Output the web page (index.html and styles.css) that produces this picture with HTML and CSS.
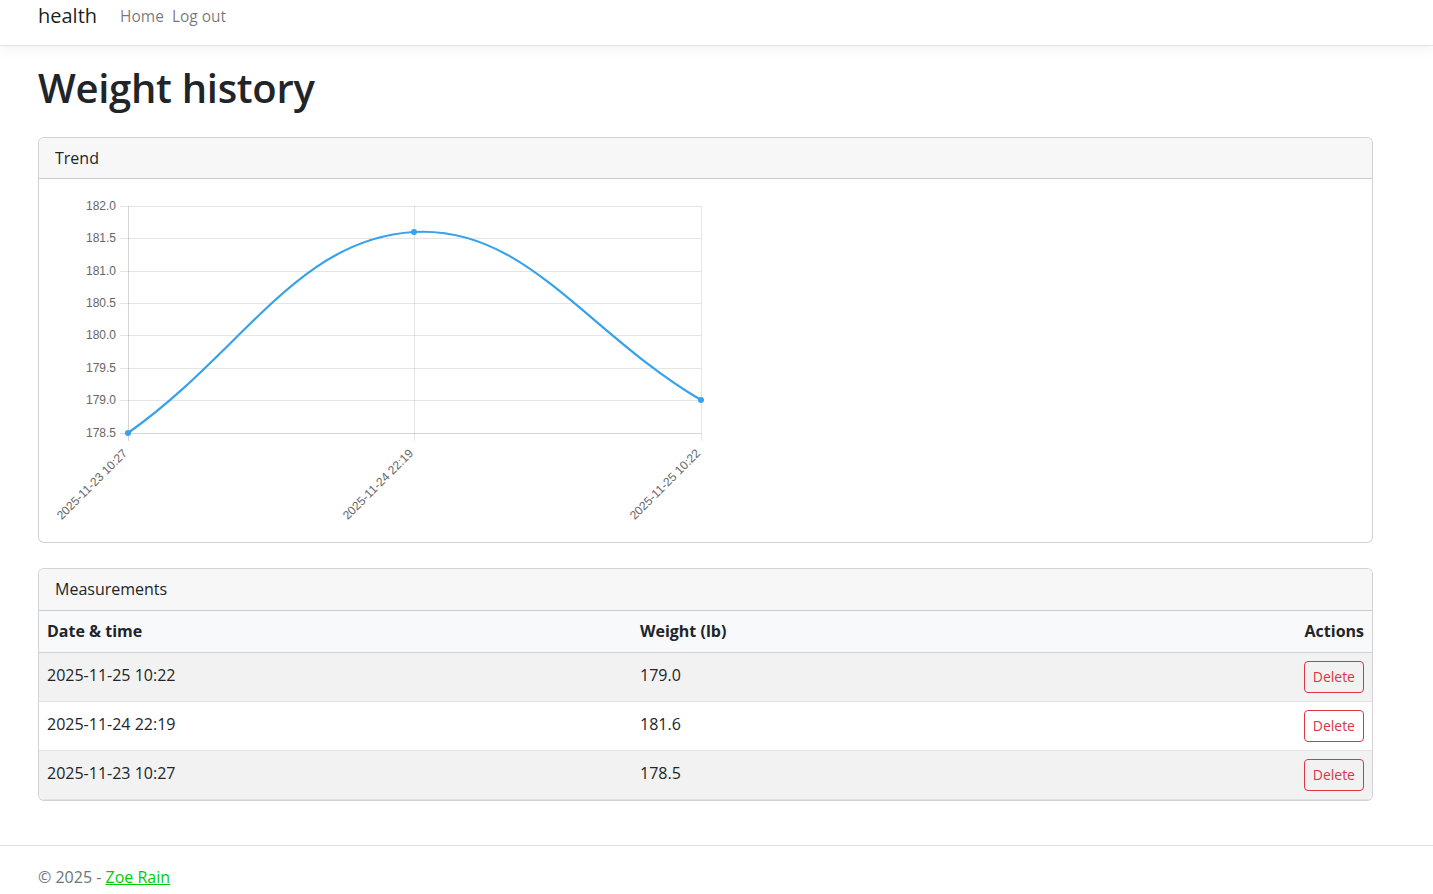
FILE: index.html
```html
<!DOCTYPE html>
<html lang="en">
<head>
<meta charset="utf-8">
<title>Weight history - health</title>
<link rel="stylesheet" href="styles.css">
</head>
<body>
<header class="navbar">
  <div class="container nav-inner">
    <a class="brand" href="#">health</a>
    <nav class="nav-links">
      <a class="nav-link" href="#">Home</a>
      <a class="nav-link" href="#">Log out</a>
    </nav>
  </div>
</header>

<main class="container main">
  <h1 class="title">Weight history</h1>

  <section class="card card-trend">
    <div class="card-header">Trend</div>
    <div class="card-body">
      <svg class="chart" width="660" height="325" viewBox="0 0 660 325" xmlns="http://www.w3.org/2000/svg">
        <g class="grid" stroke="rgba(0,0,0,0.1)" stroke-width="1">
          <line x1="65" y1="11.5" x2="646" y2="11.5"/>
          <line x1="65" y1="43.5" x2="646" y2="43.5"/>
          <line x1="65" y1="76.5" x2="646" y2="76.5"/>
          <line x1="65" y1="108.5" x2="646" y2="108.5"/>
          <line x1="65" y1="140.5" x2="646" y2="140.5"/>
          <line x1="65" y1="173.5" x2="646" y2="173.5"/>
          <line x1="65" y1="205.5" x2="646" y2="205.5"/>
          <line x1="65" y1="238.5" x2="646" y2="238.5" stroke="rgba(0,0,0,0.16)"/>
          <line x1="73.5" y1="11" x2="73.5" y2="246" stroke="rgba(0,0,0,0.16)"/>
          <line x1="359.5" y1="11" x2="359.5" y2="246"/>
          <line x1="646.5" y1="11" x2="646.5" y2="246"/>
        </g>
        <g class="yticks" font-family="Liberation Sans, Arial, sans-serif" font-size="12" fill="#666" text-anchor="end">
          <text x="61" y="14.5">182.0</text>
          <text x="61" y="46.5">181.5</text>
          <text x="61" y="79.5">181.0</text>
          <text x="61" y="111.5">180.5</text>
          <text x="61" y="143.5">180.0</text>
          <text x="61" y="176.5">179.5</text>
          <text x="61" y="208.5">179.0</text>
          <text x="61" y="241.5">178.5</text>
        </g>
        <g class="xticks" font-family="Liberation Sans, Arial, sans-serif" font-size="12" fill="#666" text-anchor="end">
          <text transform="translate(73 259) rotate(-45)">2025-11-23 10:27</text>
          <text transform="translate(359 259) rotate(-45)">2025-11-24 22:19</text>
          <text transform="translate(646 259) rotate(-45)">2025-11-25 10:22</text>
        </g>
        <path d="M73,238 C187.4,157.6 241.5,43.8 359,37 C470.7,30.6 531.2,137.8 646,205" fill="none" stroke="#36a2eb" stroke-width="2.2"/>
        <g fill="#36a2eb">
          <circle cx="73" cy="238" r="3"/>
          <circle cx="359" cy="37" r="3"/>
          <circle cx="646" cy="205" r="3"/>
        </g>
      </svg>
    </div>
  </section>

  <section class="card card-table">
    <div class="card-header">Measurements</div>
    <table class="table">
      <thead>
        <tr>
          <th class="col-date">Date &amp; time</th>
          <th class="col-weight">Weight (lb)</th>
          <th class="col-actions">Actions</th>
        </tr>
      </thead>
      <tbody>
        <tr class="striped">
          <td>2025-11-25 10:22</td>
          <td>179.0</td>
          <td class="col-actions"><button class="btn-delete" type="button">Delete</button></td>
        </tr>
        <tr>
          <td>2025-11-24 22:19</td>
          <td>181.6</td>
          <td class="col-actions"><button class="btn-delete" type="button">Delete</button></td>
        </tr>
        <tr class="striped">
          <td>2025-11-23 10:27</td>
          <td>178.5</td>
          <td class="col-actions"><button class="btn-delete" type="button">Delete</button></td>
        </tr>
      </tbody>
    </table>
  </section>
</main>

<footer class="footer">
  <div class="container">&copy; 2025 - <a class="footer-link" href="#">Zoe Rain</a></div>
</footer>
</body>
</html>
```

FILE: styles.css
```css
* {
  box-sizing: border-box;
}

html, body {
  margin: 0;
  padding: 0;
}

body {
  font-family: "Open Sans", "Noto Sans", sans-serif;
  font-size: 16px;
  line-height: 1.5;
  color: #212529;
  background: #fff;
  overflow: hidden;
}

.container {
  padding-left: 38px;
  width: 1373px;
}

.navbar {
  height: 46px;
  border-bottom: 1px solid #dee2e6;
  box-shadow: 0 4px 12px rgba(0, 0, 0, 0.05);
}

.nav-inner {
  display: flex;
  align-items: flex-start;
}

.brand {
  font-size: 20px;
  line-height: 32px;
  color: rgba(0, 0, 0, 0.9);
  text-decoration: none;
  margin-right: 19px;
}

.nav-links {
  display: flex;
}

.nav-link {
  font-size: 15.5px;
  line-height: 32px;
  padding: 0 4px;
  color: rgba(0, 0, 0, 0.55);
  text-decoration: none;
}

.title {
  font-size: 40px;
  font-weight: 600;
  line-height: 48px;
  margin: 18px 0 25px;
  letter-spacing: -0.3px;
}

.card {
  border: 1px solid rgba(0, 0, 0, 0.175);
  border-radius: 6px;
  overflow: hidden;
  background: #fff;
}

.card-trend {
  margin-bottom: 25px;
}

.card-header {
  background: #f7f7f7;
  border-bottom: 1px solid rgba(0, 0, 0, 0.175);
  padding: 8px 16px;
  font-size: 16px;
  line-height: 24px;
}

.card-table .card-header {
  line-height: 25px;
}

.card-body {
  padding: 16px 16px 22px;
}

.chart {
  display: block;
  overflow: visible;
}

.table {
  width: 100%;
  border-collapse: collapse;
}

.table th,
.table td {
  padding: 8px;
  text-align: left;
  vertical-align: top;
  border-bottom: 1px solid #dee2e6;
}

.table th {
  font-weight: 700;
  line-height: 25px;
  background: #f8f9fa;
  border-bottom-color: #cfd2d5;
}

.table td {
  line-height: 24px;
  padding-top: 10px;
  padding-bottom: 6px;
}

.table td.col-actions {
  padding-top: 8px;
  padding-bottom: 8px;
}

.striped td {
  background: #f2f2f2;
}

.col-date {
  width: 593px;
}

.table .col-actions {
  text-align: right;
}

.btn-delete {
  font-family: inherit;
  font-size: 14px;
  line-height: 22px;
  padding: 4px 8px;
  color: #dc3545;
  background: transparent;
  border: 1px solid #dc3545;
  border-radius: 4px;
  vertical-align: top;
  cursor: pointer;
}

.footer {
  margin-top: 44px;
  border-top: 1px solid #dee2e6;
  line-height: 63px;
  color: #6c757d;
  white-space: nowrap;
}

.footer-link {
  color: #00cc00;
  text-decoration: underline;
}
```
